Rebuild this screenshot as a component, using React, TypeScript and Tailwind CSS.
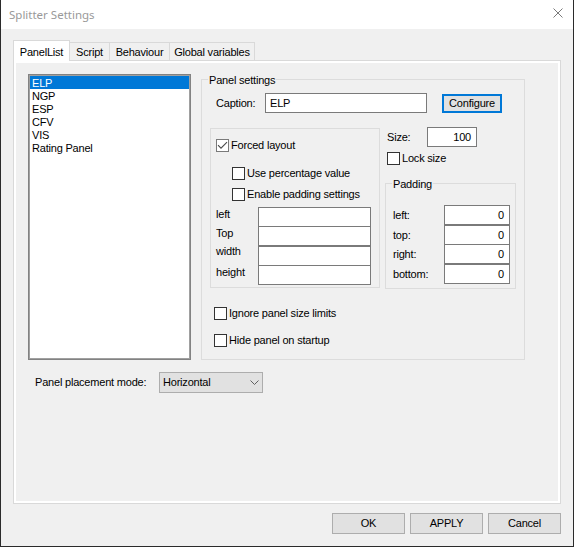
import React from "react";

function CheckBox({ checked, muted }: { checked?: boolean; muted?: boolean }) {
  return (
    <span
      className={
        muted
          ? "w-[13px] h-[13px] shrink-0 border border-[#7a7a7a] bg-white flex items-center justify-center"
          : "w-[13px] h-[13px] shrink-0 border border-[#333333] bg-white flex items-center justify-center"
      }
    >
      {checked && (
        <svg width="11" height="11" viewBox="0 0 11 11">
          <path d="M1 5.2 L4 8.2 L10 2.2" stroke="#4a4a4a" strokeWidth="1.1" fill="none" />
        </svg>
      )}
    </span>
  );
}

function CheckRow({
  label,
  checked,
  muted,
  className,
}: {
  label: string;
  checked?: boolean;
  muted?: boolean;
  className?: string;
}) {
  return (
    <div className={"flex items-center gap-[2px] h-[13px] " + (className ?? "")}>
      <CheckBox checked={checked} muted={muted} />
      <span className="whitespace-nowrap">{label}</span>
    </div>
  );
}

function Field({ className, value }: { className: string; value?: string }) {
  return (
    <div className={"h-[20px] border border-[#7a7a7a] bg-white flex items-center " + className}>
      {value}
    </div>
  );
}

function GroupBox({
  title,
  className,
  children,
}: {
  title?: string;
  className: string;
  children?: React.ReactNode;
}) {
  return (
    <div className={"relative border border-[#dcdcdc] " + className}>
      {title && (
        <span className="absolute -top-[6px] left-[6px] px-[1px] bg-[#f0f0f0] whitespace-nowrap">
          {title}
        </span>
      )}
      {children}
    </div>
  );
}

const panels = ["ELP", "NGP", "ESP", "CFV", "VIS", "Rating Panel"];

export default function App() {
  return (
    <div className="w-[574px] h-[547px] bg-[#f0f0f0] border-x border-b border-[#2b2b2b] flex flex-col overflow-hidden font-['Liberation_Sans',Arial,sans-serif] text-[11px] leading-[13px] tracking-[-0.2px] text-black">
      {/* Title bar */}
      <div className="h-[29px] shrink-0 bg-white flex items-center justify-between pl-[8px] pr-[10px]">
        <span className="font-['Noto_Sans',sans-serif] text-[11.5px] tracking-normal text-[#999999]">
          Splitter Settings
        </span>
        <svg width="10" height="10" viewBox="0 0 10 10" className="mb-[3px]">
          <path d="M0.5 0.5 L9.5 9.5 M9.5 0.5 L0.5 9.5" stroke="#7a7a7a" strokeWidth="1" />
        </svg>
      </div>

      <div className="flex flex-col px-[12px] pt-[11px]">
        {/* Tab strip */}
        <div className="flex items-end h-[20px]">
          <div className="relative z-10 h-[21px] -mb-[1px] w-[57px] border-x border-t border-[#d9d9d9] bg-white flex justify-center pt-[5px]">
            PanelList
          </div>
          <div className="h-[18px] w-[40px] border-t border-r border-[#d9d9d9] flex justify-center pt-[3px]">
            Script
          </div>
          <div className="h-[18px] w-[60px] border-t border-r border-[#d9d9d9] flex justify-center pt-[3px]">
            Behaviour
          </div>
          <div className="h-[18px] w-[85px] border-t border-r border-[#d9d9d9] flex justify-center pt-[3px]">
            Global variables
          </div>
        </div>

        {/* Tab page */}
        <div className="h-[444px] border border-[#d9d9d9]">
          <div className="h-full border-2 border-white flex flex-col">
            <div className="flex items-start ml-[12px] mt-[11px]">
              {/* Panel list */}
              <div className="w-[163px] h-[286px] border border-[#828282] shrink-0">
                <div className="h-full border border-[#a0a0a0] bg-white">
                  {panels.map((p, i) => (
                    <div
                      key={p}
                      className={
                        i === 0
                          ? "h-[13px] pl-[2px] bg-[#0078d7] text-white whitespace-nowrap leading-[14px]"
                          : "h-[13px] pl-[2px] whitespace-nowrap leading-[14px]"
                      }
                    >
                      {p}
                    </div>
                  ))}
                </div>
              </div>

              {/* Panel settings */}
              <GroupBox title="Panel settings" className="ml-[10px] mt-[5px] w-[324px] h-[281px] shrink-0">
                <div className="flex items-start mt-[13px] pl-[14px]">
                  <span className="w-[49px] h-[20px] flex items-center">Caption:</span>
                  <Field className="w-[162px] pl-[4px]" value="ELP" />
                  <button className="ml-[15px] mt-[1px] w-[60px] h-[19px] border-2 border-[#0078d7] bg-[#e1e1e1] flex items-center justify-center">
                    Configure
                  </button>
                </div>

                <div className="flex items-start mt-[14px] pl-[8px]">
                  {/* Layout options */}
                  <GroupBox className="mt-[1px] w-[170px] h-[160px] shrink-0">
                    <CheckRow label="Forced layout" checked muted className="ml-[5px] mt-[10px]" />
                    <CheckRow label="Use percentage value" className="ml-[21px] mt-[15px]" />
                    <CheckRow label="Enable padding settings" className="ml-[21px] mt-[8px]" />
                    <div className="flex flex-col mt-[6px] pl-[5px]">
                      <div className="flex items-start">
                        <span className="w-[42px] h-[20px] pt-[1px]">left</span>
                        <Field className="w-[113px]" />
                      </div>
                      <div className="flex items-start -mt-[1px]">
                        <span className="w-[42px] h-[20px] pt-[1px]">Top</span>
                        <Field className="w-[113px]" />
                      </div>
                      <div className="flex items-start">
                        <span className="w-[42px] h-[20px] -mt-[1px]">width</span>
                        <Field className="w-[113px]" />
                      </div>
                      <div className="flex items-start -mt-[1px]">
                        <span className="w-[42px] h-[20px] pt-[1px]">height</span>
                        <Field className="w-[113px]" />
                      </div>
                    </div>
                  </GroupBox>

                  {/* Size and padding */}
                  <div className="ml-[5px] w-[131px] flex flex-col shrink-0">
                    <div className="flex items-center h-[20px]">
                      <span className="w-[42px] pl-[2px]">Size:</span>
                      <Field className="w-[50px] justify-end pr-[5px]" value="100" />
                    </div>
                    <CheckRow label="Lock size" className="ml-[2px] mt-[5px]" />
                    <GroupBox title="Padding" className="mt-[18px] w-[131px] h-[106px]">
                      <div className="flex flex-col mt-[21px] pl-[7px]">
                        <div className="flex items-center">
                          <span className="w-[51px]">left:</span>
                          <Field className="w-[66px] justify-end pr-[5px]" value="0" />
                        </div>
                        <div className="flex items-center">
                          <span className="w-[51px]">top:</span>
                          <Field className="w-[66px] justify-end pr-[5px]" value="0" />
                        </div>
                        <div className="flex items-center -mt-[1px]">
                          <span className="w-[51px]">right:</span>
                          <Field className="w-[66px] justify-end pr-[5px]" value="0" />
                        </div>
                        <div className="flex items-center">
                          <span className="w-[51px]">bottom:</span>
                          <Field className="w-[66px] justify-end pr-[5px]" value="0" />
                        </div>
                      </div>
                    </GroupBox>
                  </div>
                </div>

                <CheckRow label="Ignore panel size limits" className="ml-[12px] mt-[18px]" />
                <CheckRow label="Hide panel on startup" className="ml-[12px] mt-[14px]" />
              </GroupBox>
            </div>

            {/* Placement mode */}
            <div className="flex items-center mt-[12px] pl-[19px]">
              <span className="w-[124px] whitespace-nowrap">Panel placement mode:</span>
              <div className="w-[104px] h-[21px] border border-[#adadad] bg-[#e1e1e1] flex items-center justify-between pl-[3px] pr-[3px]">
                <span>Horizontal</span>
                <svg width="9" height="5" viewBox="0 0 9 5">
                  <path d="M0.5 0.5 L4.5 4.5 L8.5 0.5" stroke="#606060" strokeWidth="1" fill="none" />
                </svg>
              </div>
            </div>
          </div>
        </div>

        {/* Dialog buttons */}
        <div className="flex justify-end gap-[5px] mt-[9px]">
          <button className="w-[73px] h-[21px] border border-[#adadad] bg-[#e1e1e1] flex items-center justify-center">
            OK
          </button>
          <button className="w-[73px] h-[21px] border border-[#adadad] bg-[#e1e1e1] flex items-center justify-center">
            APPLY
          </button>
          <button className="w-[73px] h-[21px] border border-[#adadad] bg-[#e1e1e1] flex items-center justify-center">
            Cancel
          </button>
        </div>
      </div>
    </div>
  );
}
